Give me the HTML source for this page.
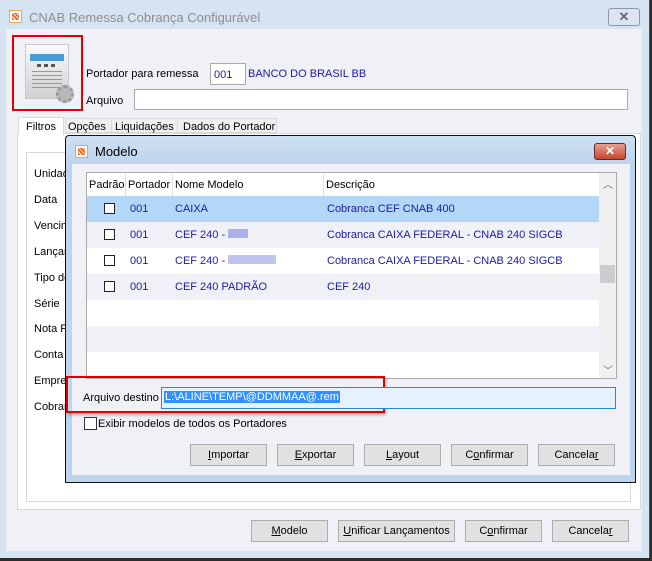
<!DOCTYPE html>
<html><head><meta charset="utf-8"><style>
*{margin:0;padding:0;box-sizing:border-box}
body{width:652px;height:561px;overflow:hidden;background:#2b2b2b;font-family:"Liberation Sans",Arial,sans-serif;font-size:11px;color:#000;position:relative}
.a{position:absolute}
.btn{position:absolute;background:#e1e1e1;border:1px solid #adadad;text-align:center;line-height:20px;font-size:11px;white-space:nowrap}
.lbl{position:absolute;font-size:11px;white-space:nowrap}
.blue{color:#1a1aa8}
.row{position:absolute;left:87px;width:512px;height:26px}
.row span{position:absolute;top:7px;color:#1a1aa8;white-space:nowrap}
.cb{position:absolute;left:17px;top:7px;width:11px;height:11px;border:1px solid #222;background:#fff}
</style></head><body>
<div class="a" style="left:0;top:0;width:650px;height:558px;background:#d6e3f1;border-right:1px solid #555"></div>
<div class="a" style="left:9px;top:10px;width:13px;height:13px;background:#fff;border:1px solid #f0a060"><div style="margin:2px;width:7px;height:7px;background:repeating-linear-gradient(45deg,#f07020 0 2px,#fff 2px 3px)"></div></div>
<div class="lbl" style="left:29px;top:10px;font-size:13px;color:#8a8f96">CNAB Remessa Cobrança Configurável</div>
<div class="a" style="left:608px;top:8px;width:32px;height:18px;border:1px solid #8a98ab;border-radius:3px;background:#dbe5f1;text-align:center;line-height:16px;color:#667;font-weight:bold;font-size:13px">✕</div>
<div class="a" style="left:6px;top:29px;width:636px;height:522px;background:#f0f1f7"></div>
<div class="a" style="left:12px;top:35px;width:71px;height:76px;border:2px solid #e00000;background:#f0f1f7"></div>
<div class="a" style="left:25px;top:44px;width:44px;height:55px;background:linear-gradient(#fafafa,#d0d0d0);border:1px solid #c8c8c8"></div>
<div class="a" style="left:30px;top:54px;width:34px;height:7px;background:#4a9ad6"></div>
<div class="a" style="left:37px;top:64px;width:20px;height:3px;background:repeating-linear-gradient(90deg,#555 0 4px,transparent 4px 7px)"></div>
<div class="a" style="left:32px;top:71px;width:30px;height:18px;background:repeating-linear-gradient(#8a9aa8 0 1px,transparent 1px 4px)"></div>
<div class="a" style="left:56px;top:85px;width:18px;height:18px;border-radius:50%;background:#b8b8b8;border:3px dotted #999"></div>
<div class="lbl" style="left:86px;top:68px">Portador para remessa</div>
<div class="a" style="left:210px;top:63px;width:36px;height:22px;background:#fff;border:1px solid #aaa"></div>
<div class="lbl blue" style="left:214px;top:69px">001</div>
<div class="lbl blue" style="left:248px;top:68px">BANCO DO BRASIL BB</div>
<div class="lbl" style="left:86px;top:95px">Arquivo</div>
<div class="a" style="left:134px;top:89px;width:494px;height:21px;background:#fff;border:1px solid #aaa"></div>
<div class="a" style="left:17px;top:133px;width:624px;height:377px;background:#fff;border:1px solid #d9d9d9"></div>
<div class="a" style="left:18px;top:117px;width:46px;height:18px;background:#fff;border:1px solid #d9d9d9;border-bottom:none"></div>
<div class="lbl" style="left:26px;top:121px">Filtros</div>
<div class="a" style="left:65px;top:118px;width:47px;height:15px;background:#f0f0f0;border:1px solid #d9d9d9"></div>
<div class="lbl" style="left:68px;top:121px">Opções</div>
<div class="a" style="left:111px;top:118px;width:67px;height:15px;background:#f0f0f0;border:1px solid #d9d9d9"></div>
<div class="lbl" style="left:115px;top:121px">Liquidações</div>
<div class="a" style="left:177px;top:118px;width:100px;height:15px;background:#f0f0f0;border:1px solid #d9d9d9"></div>
<div class="lbl" style="left:183px;top:121px">Dados do Portador</div>
<div class="a" style="left:26px;top:152px;width:605px;height:350px;background:#fff;border:1px solid #d9d9d9"></div>
<div class="lbl" style="left:34px;top:168px">Unidade</div>
<div class="lbl" style="left:34px;top:194px">Data</div>
<div class="lbl" style="left:34px;top:220px">Vencimento</div>
<div class="lbl" style="left:34px;top:246px">Lançamento</div>
<div class="lbl" style="left:34px;top:272px">Tipo de</div>
<div class="lbl" style="left:34px;top:298px">Série</div>
<div class="lbl" style="left:34px;top:323px">Nota F</div>
<div class="lbl" style="left:34px;top:349px">Conta</div>
<div class="lbl" style="left:34px;top:375px">Empresa</div>
<div class="lbl" style="left:34px;top:401px">Cobrança</div>
<div class="btn" style="left:251px;top:520px;width:77px;height:22px"><u>M</u>odelo</div>
<div class="btn" style="left:338px;top:520px;width:117px;height:22px"><u>U</u>nificar Lançamentos</div>
<div class="btn" style="left:465px;top:520px;width:77px;height:22px">C<u>o</u>nfirmar</div>
<div class="btn" style="left:552px;top:520px;width:77px;height:22px">Cancela<u>r</u></div>
<div class="a" style="left:65px;top:135px;width:571px;height:348px;border:1px solid #111;border-radius:4px 4px 0 0;background:linear-gradient(#cfe0f2,#bcd4ec 30px)"></div>
<div class="a" style="left:75px;top:145px;width:13px;height:13px;background:#fff;border:1px solid #f0a060"><div style="margin:2px;width:7px;height:7px;background:repeating-linear-gradient(45deg,#f07020 0 2px,#fff 2px 3px)"></div></div>
<div class="lbl" style="left:95px;top:144px;font-size:13px">Modelo</div>
<div class="a" style="left:594px;top:143px;width:32px;height:17px;border:1px solid #6b2a20;border-radius:3px;background:linear-gradient(#e8a090,#c8452f);text-align:center;line-height:15px;color:#fff;font-weight:bold;font-size:12px">✕</div>
<div class="a" style="left:72px;top:164px;width:558px;height:311px;background:#f0f1f7"></div>
<div class="a" style="left:86px;top:172px;width:531px;height:207px;background:#fff;border:1px solid #aaa"></div>
<div class="lbl" style="left:89px;top:179px">Padrão</div>
<div class="lbl" style="left:128px;top:179px">Portador</div>
<div class="lbl" style="left:175px;top:179px">Nome Modelo</div>
<div class="lbl" style="left:326px;top:179px">Descrição</div>
<div class="a" style="left:125px;top:174px;width:1px;height:22px;background:#e0e0e0"></div>
<div class="a" style="left:172px;top:174px;width:1px;height:22px;background:#e0e0e0"></div>
<div class="a" style="left:323px;top:174px;width:1px;height:22px;background:#e0e0e0"></div>
<div class="row" style="top:196px;background:#b3d7f7"><div class="cb"></div><span style="left:43px">001</span><span style="left:88px">CAIXA</span><span style="left:240px">Cobranca CEF CNAB 400</span></div>
<div class="row" style="top:222px;background:#f0f1f7"><div class="cb"></div><span style="left:43px">001</span><span style="left:88px">CEF 240 - <i style="display:inline-block;width:20px;height:9px;background:#aab0e8"></i></span><span style="left:240px">Cobranca CAIXA FEDERAL - CNAB 240 SIGCB</span></div>
<div class="row" style="top:248px;background:#fff"><div class="cb"></div><span style="left:43px">001</span><span style="left:88px">CEF 240 - <i style="display:inline-block;width:48px;height:9px;background:#c0c4ee"></i></span><span style="left:240px">Cobranca CAIXA FEDERAL - CNAB 240 SIGCB</span></div>
<div class="row" style="top:274px;background:#f0f1f7"><div class="cb"></div><span style="left:43px">001</span><span style="left:88px">CEF 240 PADRÃO</span><span style="left:240px">CEF 240</span></div>
<div class="row" style="top:326px;background:#f0f1f7"></div>
<div class="a" style="left:599px;top:173px;width:17px;height:205px;background:#f0f0f0"></div>
<div class="a" style="left:600px;top:265px;width:15px;height:18px;background:#cdcdcd"></div>
<div class="lbl" style="left:603px;top:176px;color:#666;font-size:10px">︿</div>
<div class="lbl" style="left:603px;top:362px;color:#666;font-size:10px">﹀</div>
<div class="a" style="left:66px;top:376px;width:319px;height:37px;border:2px solid #e00000;box-shadow:1px 2px 3px rgba(0,0,0,.3)"></div>
<div class="lbl" style="left:83px;top:392px">Arquivo destino</div>
<div class="a" style="left:161px;top:387px;width:455px;height:22px;background:#e5f1fc;border:1px solid #2f86d6"></div>
<div class="lbl" style="left:164px;top:391px;background:#3390ff;color:#fff;padding:0 1px">L:\ALINE\TEMP\@DDMMAA@.rem</div>
<div class="a" style="left:84px;top:417px;width:13px;height:13px;border:1px solid #333;background:#fff"></div>
<div class="lbl" style="left:98px;top:418px">Exibir modelos de todos os Portadores</div>
<div class="btn" style="left:190px;top:444px;width:77px;height:22px"><u>I</u>mportar</div>
<div class="btn" style="left:277px;top:444px;width:77px;height:22px"><u>E</u>xportar</div>
<div class="btn" style="left:364px;top:444px;width:77px;height:22px"><u>L</u>ayout</div>
<div class="btn" style="left:451px;top:444px;width:77px;height:22px">C<u>o</u>nfirmar</div>
<div class="btn" style="left:538px;top:444px;width:77px;height:22px">Cancela<u>r</u></div>
</body></html>
